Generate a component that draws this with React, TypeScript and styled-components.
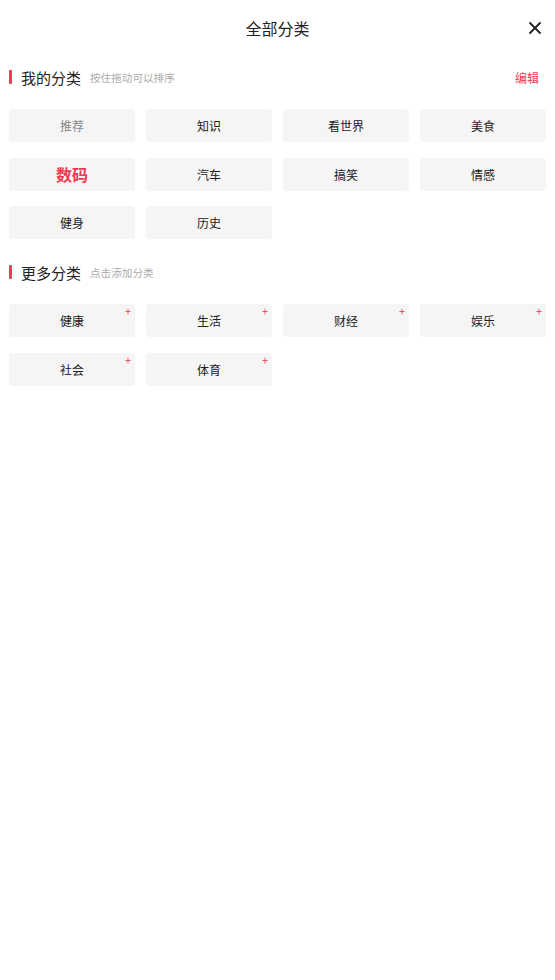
import styled, { createGlobalStyle } from "styled-components";

const RED = "#ee3a52";

const GlobalStyle = createGlobalStyle`
  html, body {
    margin: 0;
    padding: 0;
    background: #fff;
    font-family: "Noto Sans CJK SC", "Noto Sans", sans-serif;
  }
`;

const Page = styled.div`
  width: 555px;
  min-height: 980px;
  background: #fff;
  padding: 0 9px;
  box-sizing: border-box;
`;

const TopBar = styled.div`
  height: 55px;
  display: flex;
  align-items: center;
  justify-content: center;
  position: relative;
`;

const TopTitle = styled.div`
  font-size: 16px;
  color: #222;
`;

const CloseButton = styled.button`
  position: absolute;
  right: 5px;
  top: 22px;
  width: 12px;
  height: 12px;
  padding: 0;
  border: none;
  background: none;
  display: flex;
`;

const Section = styled.section`
  margin-bottom: 11px;
`;

const SectionHeader = styled.div`
  height: 44px;
  display: flex;
  align-items: center;
`;

const Bar = styled.span`
  width: 3px;
  height: 14px;
  background: ${RED};
  border-radius: 1px;
  margin-right: 9px;
`;

const SectionTitle = styled.span`
  font-size: 15px;
  color: #222;
`;

const SectionHint = styled.span`
  font-size: 10.6px;
  color: #aaa;
  margin-left: 9px;
  flex: 1;
`;

const EditLink = styled.span`
  font-size: 12px;
  color: ${RED};
  margin-right: 7px;
`;

const Grid = styled.div`
  display: grid;
  grid-template-columns: repeat(4, 126px);
  column-gap: 11px;
  row-gap: 15.5px;
  margin-top: 10px;
`;

const Chip = styled.div<{ $tone?: "muted" | "active" }>`
  position: relative;
  height: 33px;
  border-radius: 4px;
  background: #f5f5f5;
  display: flex;
  align-items: center;
  justify-content: center;
  font-size: ${(p) => (p.$tone === "active" ? "16px" : "12px")};
  font-weight: ${(p) => (p.$tone === "active" ? 700 : 400)};
  color: ${(p) =>
    p.$tone === "active" ? RED : p.$tone === "muted" ? "#888" : "#222"};
`;

const Plus = styled.span`
  position: absolute;
  top: 2px;
  right: 4px;
  font-size: 11px;
  line-height: 11px;
  color: ${RED};
`;

const mine = ["推荐", "知识", "看世界", "美食", "数码", "汽车", "搞笑", "情感", "健身", "历史"];
const more = ["健康", "生活", "财经", "娱乐", "社会", "体育"];

export default function App() {
  return (
    <Page>
      <GlobalStyle />
      <TopBar>
        <TopTitle>全部分类</TopTitle>
        <CloseButton aria-label="关闭">
          <svg width="12" height="12" viewBox="0 0 12 12">
            <path d="M1 1 L11 11 M11 1 L1 11" stroke="#222" strokeWidth="1.8" strokeLinecap="round" />
          </svg>
        </CloseButton>
      </TopBar>

      <Section>
        <SectionHeader>
          <Bar />
          <SectionTitle>我的分类</SectionTitle>
          <SectionHint>按住拖动可以排序</SectionHint>
          <EditLink>编辑</EditLink>
        </SectionHeader>
        <Grid>
          {mine.map((name) => (
            <Chip
              key={name}
              $tone={name === "推荐" ? "muted" : name === "数码" ? "active" : undefined}
            >
              {name}
            </Chip>
          ))}
        </Grid>
      </Section>

      <Section>
        <SectionHeader>
          <Bar />
          <SectionTitle>更多分类</SectionTitle>
          <SectionHint>点击添加分类</SectionHint>
        </SectionHeader>
        <Grid>
          {more.map((name) => (
            <Chip key={name}>
              {name}
              <Plus>+</Plus>
            </Chip>
          ))}
        </Grid>
      </Section>
    </Page>
  );
}
